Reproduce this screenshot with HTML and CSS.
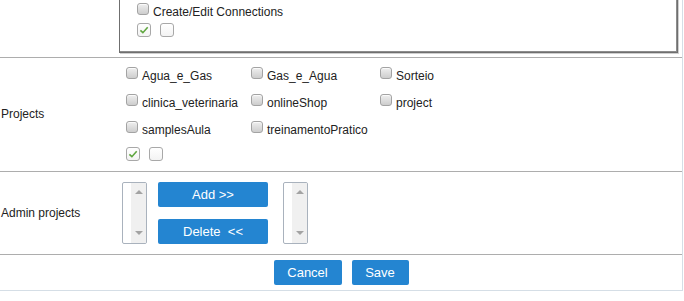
FILE: index.html
```html
<!DOCTYPE html>
<html>
<head>
<meta charset="utf-8">
<link rel="stylesheet" href="styles.css">
</head>
<body>
<div class="form">
  <div class="row row-perms">
    <div class="label"></div>
    <div class="value">
      <fieldset class="perms">
        <div class="opt"><span class="cb"></span>Create/Edit Connections</div>
        <div class="toggles">
          <span class="tick"><svg viewBox="0 0 12 12" width="12" height="12"><path d="M2.4 6.3 L4.9 8.7 L9.7 3.3" fill="none" stroke="#5fa63f" stroke-width="1.6"/></svg></span>
          <span class="tick"></span>
        </div>
      </fieldset>
    </div>
  </div>
  <div class="row row-projects">
    <div class="label">Projects</div>
    <div class="value">
      <div class="grid">
        <div class="opt"><span class="cb"></span>Agua_e_Gas</div>
        <div class="opt"><span class="cb"></span>Gas_e_Agua</div>
        <div class="opt"><span class="cb"></span>Sorteio</div>
        <div class="opt"><span class="cb"></span>clinica_veterinaria</div>
        <div class="opt"><span class="cb"></span>onlineShop</div>
        <div class="opt"><span class="cb"></span>project</div>
        <div class="opt"><span class="cb"></span>samplesAula</div>
        <div class="opt"><span class="cb"></span>treinamentoPratico</div>
      </div>
      <div class="toggles">
        <span class="tick"><svg viewBox="0 0 12 12" width="12" height="12"><path d="M2.4 6.3 L4.9 8.7 L9.7 3.3" fill="none" stroke="#5fa63f" stroke-width="1.6"/></svg></span>
        <span class="tick"></span>
      </div>
    </div>
  </div>
  <div class="row row-admin">
    <div class="label">Admin projects</div>
    <div class="value admin">
      <div class="listbox"><span class="sb"><i class="up"></i><i class="down"></i></span></div>
      <div class="movers">
        <button class="btn mover">Add &gt;&gt;</button>
        <button class="btn mover">Delete&nbsp; &lt;&lt;</button>
      </div>
      <div class="listbox second"><span class="sb"><i class="up"></i><i class="down"></i></span></div>
    </div>
  </div>
  <div class="actions">
    <button class="btn action">Cancel</button>
    <button class="btn action">Save</button>
  </div>
</div>
</body>
</html>
```

FILE: styles.css
```css
* { box-sizing: border-box; }
html, body { margin: 0; background: #fff; }
body {
  font: 12px/1.2 "Liberation Sans", Arial, sans-serif;
  color: #222;
  overflow: hidden;
}
.form {
  width: 683px;
  border-right: 1px solid #d5dee6;
  border-bottom: 1px solid #d5dee6;
}
.row {
  display: grid;
  grid-template-columns: 121px 1fr;
  align-items: center;
  border-bottom: 1px solid #adadad;
}
.label { padding: 0 1px; }
.value { padding: 0 1px; }

.row-perms .value { padding-bottom: 4px; }
.perms {
  margin: -20px 3px 0 -3px;
  padding: 21px 13px 11px;
  border: 1px solid #6f6f6f;
  box-shadow: 1px 1px 0 #cfcfcf, inset -1px -1px 0 #8c8c8c;
  min-width: 0;
}
.perms .opt { line-height: 20px; height: 20px; }

.cb {
  display: inline-block;
  width: 12px;
  height: 12px;
  margin: 0 4px;
  vertical-align: 1px;
  border: 1px solid #a3a3a3;
  border-radius: 3px;
  background: linear-gradient(#efefef, #cdcdcd);
  box-shadow: inset 0 1px 0 #fafafa;
}

.toggles {
  display: flex;
  gap: 9px;
  margin: 1px 0 4px 4px;
}
.tick {
  width: 14px;
  height: 14px;
  border: 1px solid #a8a8a8;
  border-radius: 3px;
  background: linear-gradient(#fff, #f3f3f3);
  display: flex;
  align-items: center;
  justify-content: center;
}
.tick svg { display: block; }

.row-projects .value { padding-top: 5px; padding-bottom: 10px; }
.grid {
  display: grid;
  grid-template-columns: 125px 129px 1fr;
  grid-auto-rows: 27px;
}
.grid .opt { line-height: 27px; white-space: nowrap; }
.row-projects .toggles { margin: 3px 0 0 4px; }

.admin {
  display: flex;
  align-items: flex-start;
  padding-top: 10px;
  padding-bottom: 10px;
}
.listbox {
  width: 25px;
  height: 62px;
  border: 1px solid #a9b2bd;
  border-radius: 2px;
  background: #fff;
  display: flex;
  justify-content: flex-end;
  overflow: hidden;
}
.sb {
  width: 15px;
  height: 100%;
  background: #f0f0f0;
  display: flex;
  flex-direction: column;
  justify-content: space-between;
  align-items: center;
  padding: 7px 0 8px;
}
.up, .down {
  display: block;
  width: 0;
  height: 0;
  border-left: 4px solid transparent;
  border-right: 4px solid transparent;
}
.up { border-bottom: 4px solid #a3a3a3; }
.down { border-top: 4px solid #a3a3a3; }

.movers {
  display: flex;
  flex-direction: column;
  gap: 12px;
  margin: 0 15px 0 11px;
}
.btn {
  font: 13px "Liberation Sans", Arial, sans-serif;
  color: #fff;
  background: #2485d1;
  border: none;
  border-radius: 2px;
  height: 25px;
  padding: 0 14px;
  margin: 0;
  cursor: pointer;
}
.mover { width: 110px; padding: 0; }

.actions {
  display: flex;
  justify-content: center;
  gap: 10px;
  padding: 5px 0;
}
.action:first-child { width: 68px; padding: 0; }
.action:last-child { width: 57px; padding: 0; }
```
